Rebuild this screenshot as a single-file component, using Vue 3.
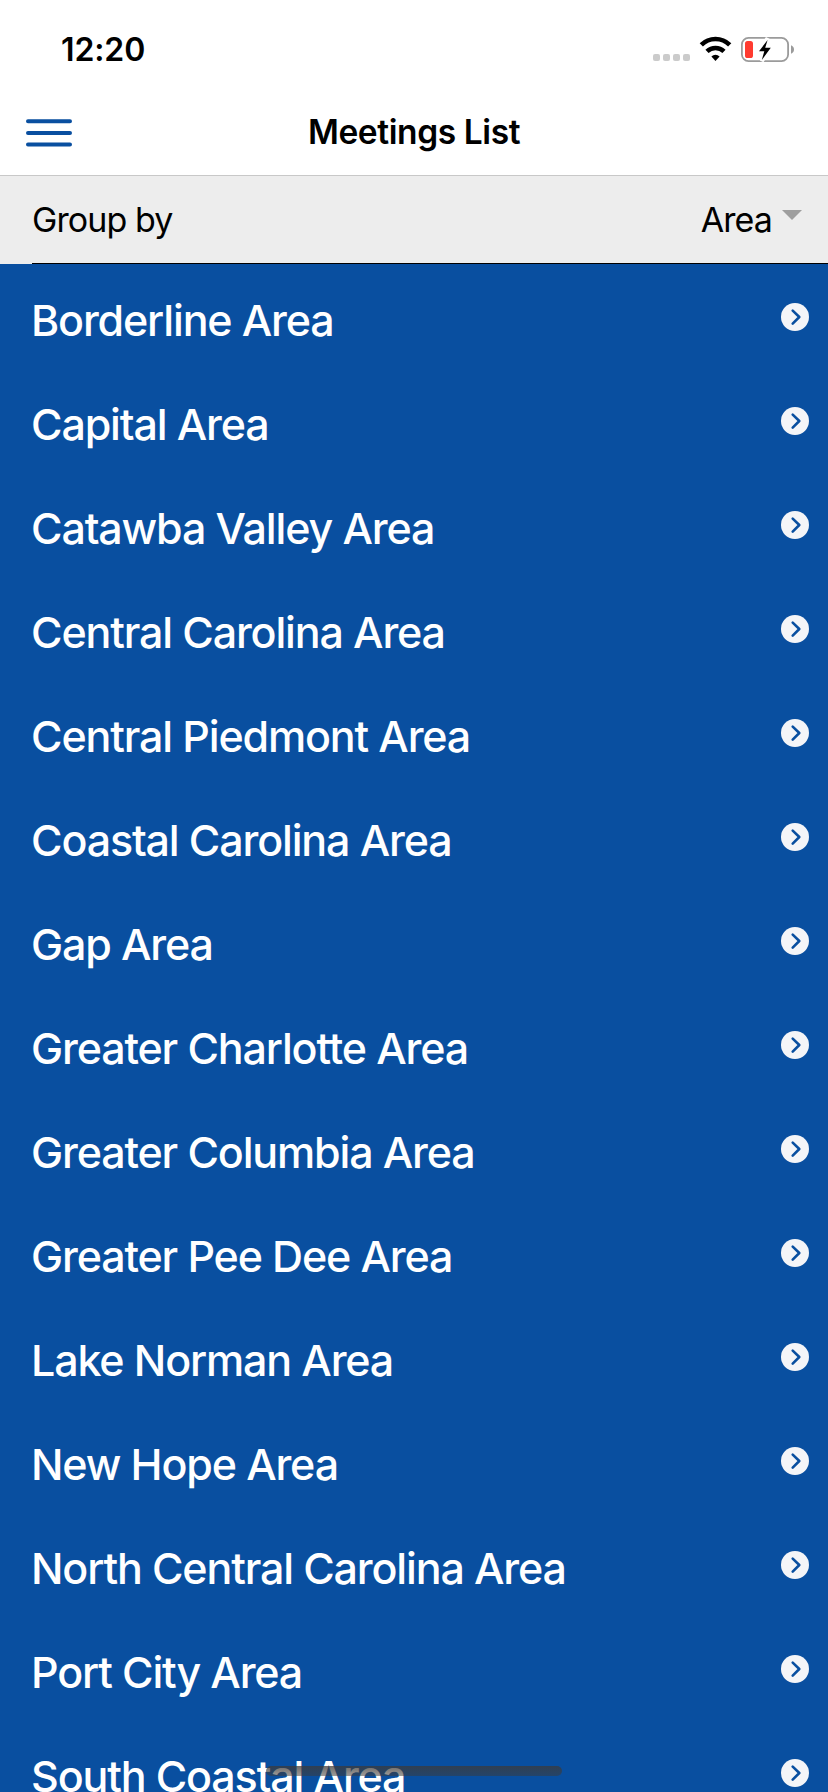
<script setup>
const areas = [
  'Borderline Area',
  'Capital Area',
  'Catawba Valley Area',
  'Central Carolina Area',
  'Central Piedmont Area',
  'Coastal Carolina Area',
  'Gap Area',
  'Greater Charlotte Area',
  'Greater Columbia Area',
  'Greater Pee Dee Area',
  'Lake Norman Area',
  'New Hope Area',
  'North Central Carolina Area',
  'Port City Area',
  'South Coastal Area',
]
</script>

<template>
  <div class="screen">
    <div class="status">
      <span class="time">12:20</span>
      <svg class="status-icons" width="150" height="30" viewBox="0 0 150 30">
        <g fill="#cbcbcb">
          <rect x="3" y="20" width="7" height="7" rx="2" />
          <rect x="13" y="20" width="7" height="7" rx="2" />
          <rect x="23" y="20" width="7" height="7" rx="2" />
          <rect x="33" y="20" width="7" height="7" rx="2" />
        </g>
        <g fill="none" stroke="#000" stroke-width="4.6">
          <path d="M51.3 10.8 A20.2 20.2 0 0 1 79.7 10.8" />
          <path d="M57 17.4 A12.4 12.4 0 0 1 74 17.4" />
        </g>
        <path d="M61.4 22.4 A6 6 0 0 1 69.6 22.4 L65.5 27 Z" fill="#000" />
        <rect x="91.9" y="3.9" width="46.2" height="23.2" rx="6.6" fill="none" stroke="#9b9b9b" stroke-width="1.8" />
        <path d="M141 11.2 Q144 12.4 144 15.5 Q144 18.6 141 19.8 Z" fill="#9b9b9b" />
        <rect x="95" y="7" width="8" height="17" rx="2.6" fill="#ff3b30" />
        <path d="M117.6 4.2 L109 17.3 H114.3 L111.8 27 L120.8 13.8 H115.2 Z" fill="#000" stroke="#fff" stroke-width="4" />
        <path d="M117.6 6 L109 17.3 H114.3 L111.8 26 L120.8 13.8 H115.2 Z" fill="#000" />
      </svg>
    </div>

    <header class="toolbar">
      <svg class="menu" width="46" height="28" viewBox="0 0 46 28">
        <g stroke="#094fa0" stroke-width="4" stroke-linecap="round">
          <path d="M2 2.3H44M2 14H44M2 25.6H44" />
        </g>
      </svg>
      <h1 class="title">Meetings List</h1>
    </header>

    <div class="group">
      <div class="group-inner">
        <span class="label">Group by</span>
        <span class="value">Area</span>
        <span class="caret"></span>
      </div>
    </div>

    <ul class="list">
      <li v-for="area in areas" :key="area" class="row">
        <span class="name">{{ area }}</span>
        <svg class="go" width="28" height="28" viewBox="0 0 28 28">
          <circle cx="14" cy="14" r="14" fill="#f4f5f8" />
          <path d="M11.7 7.6 L18.3 14 L11.7 20.6" fill="none" stroke="#094fa0" stroke-width="2.6" stroke-linecap="round" stroke-linejoin="round" />
        </svg>
      </li>
    </ul>

    <div class="home"></div>
  </div>
</template>

<style>
html,
body {
  margin: 0;
  overflow: hidden;
}
</style>

<style scoped>
.screen {
  position: relative;
  box-sizing: border-box;
  width: 828px;
  height: 1792px;
  overflow: hidden;
  background: #fff;
  color: #000;
  font-family: Inter, "Liberation Sans", sans-serif;
}

.status {
  display: flex;
  align-items: center;
  justify-content: space-between;
  box-sizing: border-box;
  height: 98px;
  padding: 0 28px 0 61px;
}

.time {
  font-size: 32px;
  font-weight: 600;
  letter-spacing: -0.1px;
}

.toolbar {
  display: grid;
  grid-template-columns: 46px 1fr 46px;
  align-items: center;
  box-sizing: border-box;
  height: 78px;
  padding: 0 26px 9px;
  border-bottom: 1px solid #c8c8c8;
}

.menu {
  margin-top: 2px;
}

.title {
  margin: 0;
  font-size: 33.5px;
  font-weight: 600;
  letter-spacing: -0.4px;
  text-align: center;
}

.group {
  height: 88px;
  padding-left: 32px;
  background: #ededed;
}

.group-inner {
  display: flex;
  align-items: center;
  box-sizing: border-box;
  height: 88px;
  padding-right: 26px;
  border-bottom: 1px solid #000;
  font-size: 34px;
  letter-spacing: -0.9px;
}

.label {
  flex: 1;
}

.caret {
  margin: -9px 0 0 10px;
  border: 10px solid transparent;
  border-top-color: #9e9e9e;
  border-bottom: 0;
}

.list {
  margin: 0;
  padding: 0;
  list-style: none;
  background: #094fa0;
}

.row {
  display: flex;
  align-items: flex-start;
  justify-content: space-between;
  box-sizing: border-box;
  height: 104px;
  padding: 9px 19px 0 31px;
  color: #fff;
}

.name {
  font-size: 43px;
  font-weight: 500;
  line-height: 95px;
  letter-spacing: -1.15px;
  white-space: nowrap;
}

.go {
  margin-top: 30px;
}

.home {
  position: absolute;
  left: 266px;
  bottom: 16px;
  width: 296px;
  height: 10px;
  border-radius: 5px;
  background: linear-gradient(rgba(62, 58, 54, 0.75), rgba(62, 58, 54, 0.5));
}
</style>
